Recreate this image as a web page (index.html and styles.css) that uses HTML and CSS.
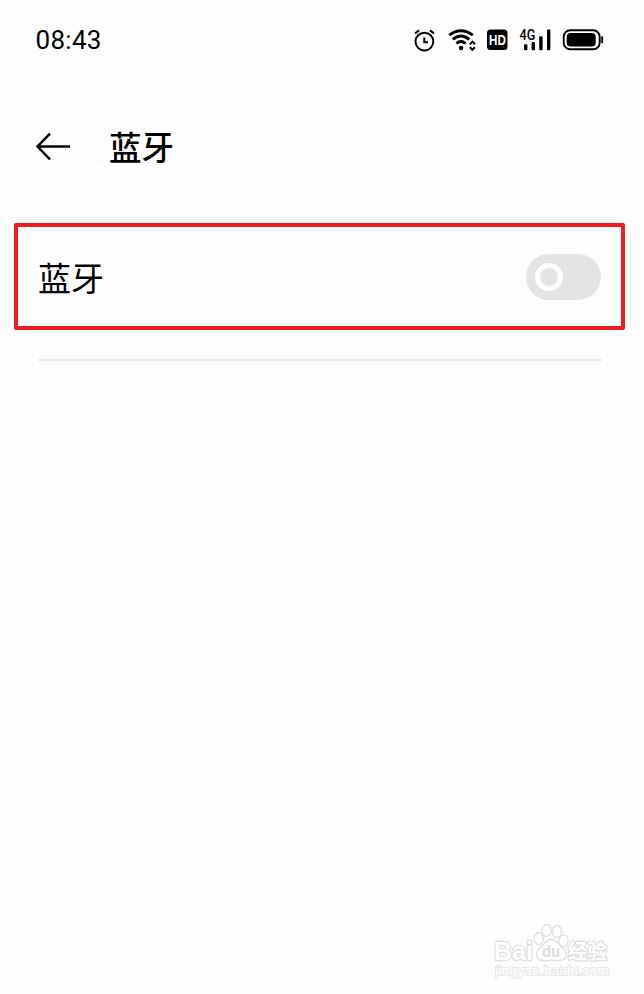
FILE: index.html
```html
<!DOCTYPE html>
<html lang="zh-CN">
<head>
  <meta charset="UTF-8">
  <meta name="viewport" content="width=device-width, initial-scale=1.0">
  <title>蓝牙</title>
  <link rel="stylesheet" href="styles.css">
</head>
<body>
  <header class="status-bar">
    <span class="time">08:43</span>
    <div class="status-icons">
      <svg class="alarm" width="24" height="24" fill="none" stroke="#000" stroke-width="2">
        <circle cx="11.4" cy="13.6" r="8.9"/>
        <path d="M2 5.5L6 2.4M17 2.4L21 5.5" stroke-width="2.2"/>
        <path d="M11.3 9.6V14.2H15"/>
      </svg>
      <svg class="wifi" width="28" height="24" fill="none" stroke="#000" stroke-width="2.8">
        <path d="M1.2 7.2Q13 -1.6 24.8 7.2M4.8 11.4Q13 4.6 21.2 11.4M8.4 15.5Q13 11.4 17.6 15.5"/>
        <circle cx="13" cy="20" r="2.2" fill="#000" stroke="none"/>
        <path d="M21.8 16.2L24.4 13.6L27 16.2M21.8 19.2L24.4 21.8L27 19.2" stroke-width="2"/>
      </svg>
      <svg class="hd" width="21" height="24">
        <rect x="0" y="1.5" width="20.5" height="20.5" rx="3.5"/>
        <text x="2" y="17" textLength="16.8" lengthAdjust="spacingAndGlyphs">HD</text>
      </svg>
      <svg class="signal" width="32" height="24">
        <text x="0.6" y="11.8" textLength="15.8" lengthAdjust="spacingAndGlyphs">4G</text>
        <rect x="5" y="16.2" width="3.4" height="6" rx="1"/>
        <rect x="12.6" y="13.9" width="3.4" height="8.3" rx="1"/>
        <rect x="20.2" y="8.2" width="3.4" height="14" rx="1"/>
        <rect x="28" y="1.4" width="3.4" height="20.8" rx="1"/>
      </svg>
      <svg class="battery" width="42" height="24">
        <rect x="1.7" y="2.3" width="36" height="19" rx="6.5" fill="none" stroke="#000" stroke-width="1.9"/>
        <rect x="4.7" y="5.1" width="29" height="13.4" rx="4"/>
        <rect x="39.2" y="8.3" width="1.9" height="7" rx="0.8"/>
      </svg>
    </div>
  </header>

  <section class="title-bar">
    <svg class="back" width="35" height="30" fill="none" stroke="#000" stroke-width="2.4">
      <path d="M14 2.7L1.500 15.500L14 28.300M1.500 15.500H34"/>
    </svg>
    <h1>蓝牙</h1>
  </section>

  <main>
    <section class="setting">
      <span class="label">蓝牙</span>
      <div class="toggle"><div class="knob"></div></div>
    </section>
    <div class="divider"></div>
  </main>

  <svg class="watermark" width="124" height="64">
    <text class="brand" x="3" y="40" textLength="39" lengthAdjust="spacingAndGlyphs">Bai</text>
    <ellipse cx="47.8" cy="18.5" rx="4.6" ry="6"/>
    <ellipse cx="55.6" cy="10.5" rx="4.6" ry="6"/>
    <ellipse cx="66" cy="11.5" rx="4.6" ry="6"/>
    <ellipse cx="72.6" cy="21" rx="4.6" ry="5.8"/>
    <path d="M60 19.5C54 19.5 53 25 49 28C44 32 44 40 52 40.5C56 41 57 40 60 40C63 40 65 41 69 40.5C77 39.5 76.500 32 71.500 28C67 24.500 66 19.500 60 19.500Z"/>
    <text class="du" x="51" y="36.500" textLength="18" lengthAdjust="spacingAndGlyphs">du</text>
    <text class="cn" x="77" y="38.500" textLength="39" lengthAdjust="spacingAndGlyphs">经验</text>
    <text class="url" x="4" y="54.500" textLength="114" lengthAdjust="spacingAndGlyphs">jingyan.baidu.com</text>
  </svg>
</body>
</html>
```

FILE: styles.css
```css
* {
    box-sizing: border-box;
    padding: 0;
    margin: 0;
}
body {
    height: 994px;
    overflow: hidden;
    background: #fefefe;
    color: #000;
    font-family: Roboto, "Noto Sans CJK SC", sans-serif;
}
.status-bar {
    display: flex;
    justify-content: space-between;
    align-items: center;
    height: 80px;
    padding: 0 40px 0 35.5px;
}
.time {
    font-size: 26px;
    letter-spacing: 0.3px;
    line-height: 30px;
}
.status-icons {
    display: flex;
    gap: 11px;
}
.status-icons svg {
    display: block;
}
.hd text {
    fill: #fff;
    font: bold 14px "Liberation Sans", sans-serif;
}
.signal text {
    font: 500 14px Roboto, sans-serif;
}
.title-bar {
    display: flex;
    align-items: center;
    gap: 38px;
    height: 132px;
    padding-left: 36px;
}
.title-bar h1 {
    font: 500 32.5px/48px "Noto Sans CJK SC", sans-serif;
}
main {
    padding: 11px 19px 0 14px;
}
.setting {
    display: flex;
    justify-content: space-between;
    align-items: center;
    height: 107px;
    padding: 0 20px;
    border: 4px solid #f01c24;
    border-radius: 2px;
}
.label {
    font: 400 33px/48px "Noto Sans CJK SC", sans-serif;
}
.toggle {
    display: flex;
    align-items: center;
    width: 75px;
    height: 46px;
    padding-left: 9px;
    border-radius: 23px;
    background: #e4e4e4;
}
.knob {
    width: 28px;
    height: 28px;
    border: 5.5px solid #fefefe;
    border-radius: 50%;
}
.divider {
    height: 2px;
    margin: 29px 23px 0 24px;
    background: #ebebeb;
}
.watermark {
    position: absolute;
    right: 29px;
    bottom: 10px;
    fill: #fff;
    stroke: #e0e0e0;
    stroke-width: 1.3;
}
.watermark text {
    font-family: "Liberation Sans", "Noto Sans CJK SC", sans-serif;
    font-weight: bold;
    paint-order: stroke;
    stroke-width: 2.4;
    stroke-linejoin: round;
}
.watermark .brand {
    font-size: 25px;
}
.watermark .du {
    fill: #dcdcdc;
    stroke: none;
    font-size: 16px;
}
.watermark .cn {
    font-size: 20px;
}
.watermark .url {
    font-size: 13px;
    stroke-width: 1.8;
    stroke: #e6e6e6;
    font-weight: normal;
}
```
